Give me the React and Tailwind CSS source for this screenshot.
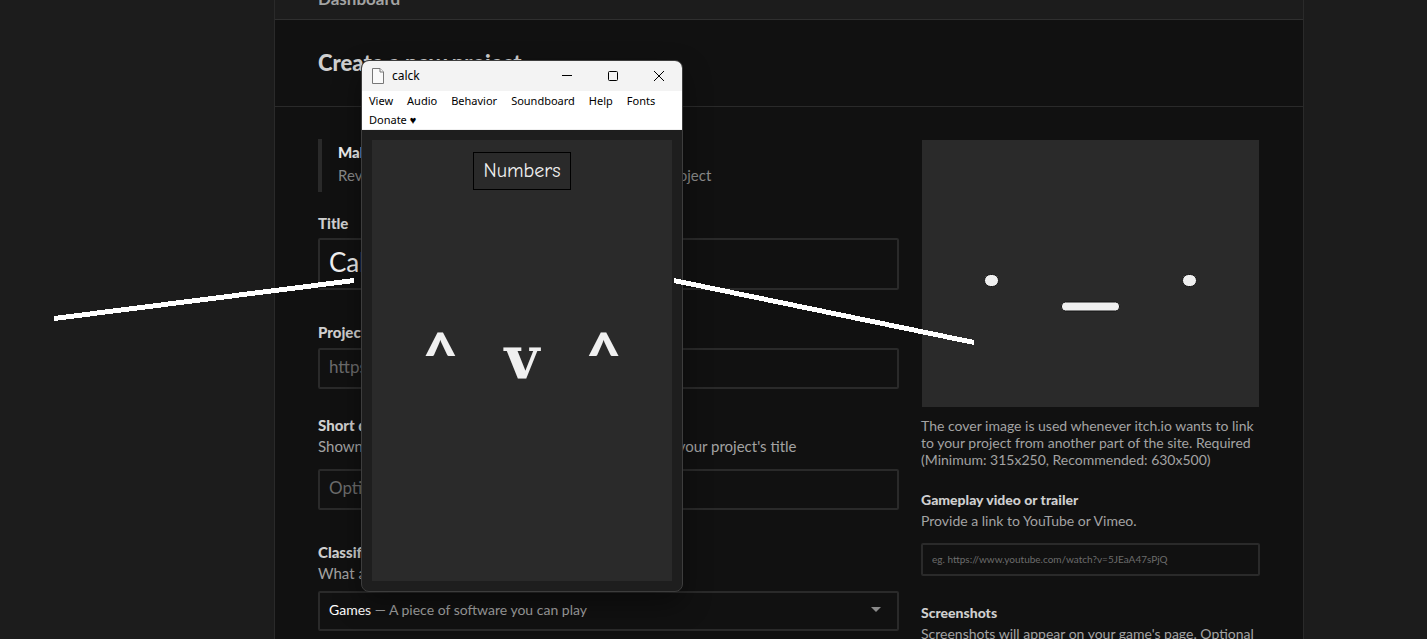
import { useState } from "react";

const menuItems = ["View", "Audio", "Behavior", "Soundboard", "Help", "Fonts", "Donate ♥"];

const inputClass =
  "block w-full rounded-xs border-2 border-[#2a2a2a] bg-[#111111] px-[9px] text-[#f0f0f0] placeholder-[#6c6c6c] outline-none";

const ProjectForm = () => {
  const [title, setTitle] = useState("Calck");
  const labelClass = "block font-black text-[#cfcfcf]";

  return (
    <form className="min-w-0 flex-1 text-[15px] leading-[21px] text-[#a3a3a3]">
      <div className="border-l-4 border-[#2a2a2a] pt-[2px] pb-[5px] pl-4 leading-[23px]">
        <p className="font-black text-[#f0f0f0]">Make sure everyone can find your page</p>
        <p className="text-[#8a8a8a]">Review our quality guidelines before posting your project</p>
      </div>

      <div className="mt-[21px]">
        <label htmlFor="title" className={labelClass}>Title</label>
        <input
          id="title"
          type="text"
          value={title}
          onChange={(e) => setTitle(e.target.value)}
          className={`${inputClass} mt-1 h-[52px] pb-1 text-[26px]`}
        />
      </div>

      <div className="mt-8">
        <label htmlFor="url" className={labelClass}>Project URL</label>
        <input id="url" type="text" placeholder="https://calck.itch.io/" className={`${inputClass} mt-[5px] h-[41px] pb-1 text-[17px]`} />
      </div>

      <div className="mt-[26px]">
        <label htmlFor="tagline" className={labelClass}>Short description or tagline</label>
        <p>Shown when we link to your project. Avoid duplicating your project's title</p>
        <input id="tagline" type="text" placeholder="Optional" className={`${inputClass} mt-3 h-[41px] pb-1 text-[17px]`} />
      </div>

      <div className="mt-8">
        <label htmlFor="classification" className={labelClass}>Classification</label>
        <p>What are you uploading?</p>
        <div className="relative mt-[7px] text-[14px]">
          <select
            id="classification"
            className="block h-10 w-full appearance-none rounded-xs border-2 border-[#2a2a2a] bg-[#111111] px-[9px] text-transparent outline-none"
          >
            <option>Games — A piece of software you can play</option>
          </select>
          <div aria-hidden="true" className="pointer-events-none absolute inset-0 flex items-center justify-between pr-[18px] pb-1 pl-[11px]">
            <span>
              <span className="text-white">Games</span> — A piece of software you can play
            </span>
            <svg width="10" height="5" viewBox="0 0 10 5">
              <path d="M0 0H10L5 5Z" fill="#8a8a8a" />
            </svg>
          </div>
        </div>
      </div>
    </form>
  );
};

const CoverImage = () => (
  <svg viewBox="0 0 337 267" className="mx-px mt-px block bg-[#2a2a2a]" role="img" aria-label="Cover image">
    <g fill="#f0f0f0" stroke="#151515" strokeWidth="1">
      <rect x="62.500" y="134.500" width="14" height="12" rx="6" />
      <rect x="260.500" y="134.500" width="14" height="12" rx="6" />
      <rect x="139.500" y="162" width="58" height="9" rx="4" />
    </g>
  </svg>
);

const Sidebar = () => (
  <aside className="w-[339px] shrink-0 text-[14px] leading-[21px] text-[#a3a3a3]">
    <CoverImage />
    <p className="mt-[10px] leading-[17px]">
      The cover image is used whenever itch.io wants to link to your project from another part of the site. Required
      (Minimum: 315x250, Recommended: 630x500)
    </p>

    <div className="mt-[22px]">
      <label htmlFor="video" className="block leading-5 font-black text-[#cfcfcf]">
        Gameplay video or trailer
      </label>
      <p>Provide a link to YouTube or Vimeo.</p>
      <input
        id="video"
        type="text"
        placeholder="eg. https://www.youtube.com/watch?v=5JEaA47sPjQ"
        className={`${inputClass} mt-3 h-[33px] pb-[2px] text-[10px]`}
      />
    </div>

    <div className="mt-[27px]">
      <h3 className="leading-5 font-black text-[#cfcfcf]">Screenshots</h3>
      <p>Screenshots will appear on your game's page. Optional</p>
    </div>
  </aside>
);

const CalckWindow = () => (
  <div className="absolute top-[60px] left-[361px] w-[322px]">
    <div className="overflow-hidden rounded-lg border border-[#3d3d3d] bg-[#1e1e1e] font-['Noto_Sans','Open_Sans',sans-serif] text-black shadow-[0_12px_28px_rgba(0,0,0,0.4)]">
      <div className="flex h-[30px] items-center bg-[#f3f3f3] pl-[10px] text-[12px]">
        <svg width="12" height="16" viewBox="0 0 12 16" fill="#fafafa" stroke="#777777">
          <path d="M0.500 0.500H8L11.500 4V15.500H0.500Z" />
          <path d="M8 0.500V4H11.500" />
        </svg>
        <span className="ml-2 flex-1">calck</span>
        <button type="button" aria-label="Minimize" className="flex w-[46px] justify-center">
          <svg width="10" height="10" viewBox="0 0 10 10" stroke="#000">
            <path d="M0 4.500H10" />
          </svg>
        </button>
        <button type="button" aria-label="Maximize" className="flex w-[46px] justify-center">
          <svg width="10" height="10" viewBox="0 0 10 10" fill="none" stroke="#000">
            <rect x="0.500" y="0.500" width="9" height="9" rx="1" />
          </svg>
        </button>
        <button type="button" aria-label="Close" className="flex w-[46px] justify-center">
          <svg width="10" height="10" viewBox="0 0 10 10" stroke="#000">
            <path d="M0 0L10 10M10 0L0 10" />
          </svg>
        </button>
      </div>

      <div className="flex flex-wrap gap-x-[14px] border-b border-[#f0f0f0] bg-white px-[7px] text-[11px] leading-[19px]">
        {menuItems.map((item) => (
          <button key={item} type="button">
            {item}
          </button>
        ))}
      </div>

      <div className="p-[10px]">
        <div className="flex h-[441px] flex-col items-center bg-[#2a2a2a] pt-3 text-[#f0f0f0]">
          <button
            type="button"
            className="h-[38px] border border-black px-[10px] font-['Comic_Sans_MS','Comic_Neue',cursive] text-[20px]"
          >
            Numbers
          </button>
          <div className="mt-[130px] flex w-full items-start justify-between px-[51px] font-[Lato,sans-serif] text-[60px] leading-[68px] font-black">
            <span>^</span>
            <span className="mt-1 font-['DejaVu_Serif',serif]">v</span>
            <span>^</span>
          </div>
        </div>
      </div>
    </div>

    {/* arms */}
    <svg className="absolute top-[218px] -left-[307px]" width="300" height="44" viewBox="0 0 300 44" fill="#fff" shapeRendering="crispEdges">
      <path d="M0 38L300 0V5L0 43Z" />
    </svg>
    <svg className="absolute top-[218px] left-[313px]" width="300" height="68" viewBox="0 0 300 68" fill="#fff" shapeRendering="crispEdges">
      <path d="M0 0L300 62V67L0 5Z" />
    </svg>
  </div>
);

export default function App() {
  return (
    <div className="relative h-screen overflow-hidden bg-[#1c1c1c] pr-[123px] pl-[274px] font-[Lato,sans-serif]">
      <div className="min-h-full border-x border-[#2a2a2a] bg-[#111111]">
        <nav className="flex h-5 items-end border-b border-[#2f2f2f] bg-[#1c1c1c] px-[43px] pb-[10px]">
          <a href="#dashboard" className="text-[17px] leading-5 font-bold text-[#a3a3a3]">
            Dashboard
          </a>
        </nav>
        <header className="flex h-[87px] items-center border-b border-[#2a2a2a] px-[43px] pb-[2px]">
          <h1 className="text-[22px] font-black text-[#cfcfcf]">Create a new project</h1>
        </header>
        <main className="flex gap-[22px] pt-8 pr-[43px] pl-[43px]">
          <ProjectForm />
          <Sidebar />
        </main>
      </div>

      <CalckWindow />
    </div>
  );
}
